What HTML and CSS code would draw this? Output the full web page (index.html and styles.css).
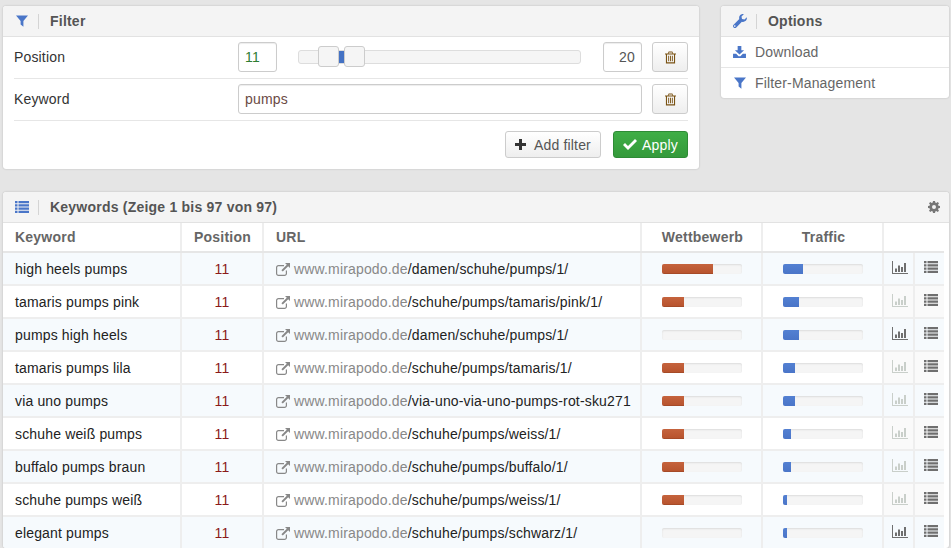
FILE: index.html
```html
<!DOCTYPE html>
<html lang="de">
<head>
<meta charset="utf-8">
<title>Keywords</title>
<link rel="stylesheet" href="styles.css">
</head>
<body>
<svg class="defs" width="0" height="0" aria-hidden="true">
  <symbol id="i-filter" viewBox="0 0 12 12"><path d="M0 .5h12L7.400 6v5.800L4.600 9.600V6z"/></symbol>
  <symbol id="i-trash" viewBox="0 0 12 13"><path d="M4 0h4l1 2h3v1.200h-1V13H1V3.200H0V2h3zM4.300 1.100 3.900 2h4.200l-.4-.9zM2.200 3.200v8.600h7.600V3.200zM3.500 4.500h1v6h-1zM5.500 4.500h1v6h-1zM7.500 4.500h1v6h-1z" fill-rule="evenodd"/></symbol>
  <symbol id="i-wrench" viewBox="0 0 14 14"><path d="M13.800 3.200c.3 1.500-.2 3-1.400 3.900-1 .8-2.300 1-3.500.6L3.300 13.400c-.8.800-2 .8-2.700 0-.8-.8-.8-2 0-2.700l5.700-5.600C5.900 3.900 6.100 2.600 6.900 1.600 7.800.4 9.300-.1 10.800.2L8.500 2.500l.5 2.500 2.500.5zM2 11.300a.8.800 0 1 0 .1 1.500.8.800 0 0 0-.1-1.500z" fill-rule="evenodd"/></symbol>
  <symbol id="i-download" viewBox="0 0 14 13"><path d="M5 0h4v4.500h3L7 9.300 2 4.500h3zM0 8.500h3.400L6 11h2l2.600-2.500H14V13H0z"/></symbol>
  <symbol id="i-list" viewBox="0 0 14 12"><path d="M0 0h2.500v2.200H0zM3.500 0H14v2.200H3.500zM0 3.300h2.500v2.200H0zM3.500 3.300H14v2.200H3.500zM0 6.600h2.500v2.200H0zM3.500 6.600H14v2.200H3.500zM0 9.800h2.500V12H0zM3.500 9.800H14V12H3.500z"/></symbol>
  <symbol id="i-gear" viewBox="0 0 12 12"><path d="M5 0h2l.3 1.600 1 .4L9.700 1l1.300 1.300-1 1.400.5 1L12 5v2l-1.500.3-.5 1 1 1.400L9.700 11l-1.400-1-1 .4L7 12H5l-.3-1.600-1-.4L2.300 11 1 9.700l1-1.400-.5-1L0 7V5l1.500-.3.500-1-1-1.400L2.300 1l1.400 1 1-.4zM6 4a2 2 0 1 0 0 4 2 2 0 0 0 0-4z" fill-rule="evenodd"/></symbol>
  <symbol id="i-ext" viewBox="0 0 14 13"><path d="M2.500 2H8v1.200H2.500c-.7 0-1.300.6-1.300 1.300v6c0 .7.600 1.300 1.300 1.300h6c.7 0 1.300-.6 1.300-1.300V7.500H11v3c0 1.400-1.100 2.500-2.500 2.500h-6C1.100 13 0 11.900 0 10.500v-6C0 3.100 1.100 2 2.500 2z"/><path d="M9 0h5v5l-1.800-1.800L6.800 8.600 5.400 7.200l5.400-5.400z"/></symbol>
  <symbol id="i-chart" viewBox="0 0 16 13"><path d="M0 0h1v12h15v1H0z"/><path d="M3 7.500h2V11H3zM6 4.500h2V11H6zM9 6h2v5H9zM12 2h2v9h-2z"/></symbol>
  <symbol id="i-plus" viewBox="0 0 11 11"><path d="M4 0h3v4h4v3H7v4H4V7H0V4h4z"/></symbol>
  <symbol id="i-check" viewBox="0 0 14 11"><path d="M5 11 0 6l2-2 3 3 7-7 2 2z"/></symbol>
</svg>

<div class="top">
  <section class="panel filter">
    <header class="panel-head">
      <span class="head-icon"><svg class="ico ico-filter"><use href="#i-filter"/></svg></span>
      <h2>Filter</h2>
    </header>
    <div class="filter-body">
      <div class="filter-row">
        <label class="filter-label">Position</label>
        <div class="filter-control">
          <span class="field field-num field-green">11</span>
          <div class="slider">
            <span class="slider-range"></span>
            <span class="slider-handle handle-a"></span>
            <span class="slider-handle handle-b"></span>
          </div>
          <span class="field field-num field-right">20</span>
        </div>
        <button class="btn btn-trash"><svg class="ico ico-trash"><use href="#i-trash"/></svg></button>
      </div>
      <div class="filter-row">
        <label class="filter-label">Keyword</label>
        <div class="filter-control">
          <span class="field field-wide">pumps</span>
        </div>
        <button class="btn btn-trash"><svg class="ico ico-trash"><use href="#i-trash"/></svg></button>
      </div>
      <div class="filter-actions">
        <button class="btn btn-add"><svg class="ico ico-plus"><use href="#i-plus"/></svg>Add filter</button>
        <button class="btn btn-apply"><svg class="ico ico-check"><use href="#i-check"/></svg>Apply</button>
      </div>
    </div>
  </section>

  <section class="panel options">
    <header class="panel-head">
      <span class="head-icon"><svg class="ico ico-wrench"><use href="#i-wrench"/></svg></span>
      <h2>Options</h2>
    </header>
    <a class="option-link"><svg class="ico ico-download"><use href="#i-download"/></svg>Download</a>
    <a class="option-link"><svg class="ico ico-filter"><use href="#i-filter"/></svg>Filter-Management</a>
  </section>
</div>

<section class="panel keywords">
  <header class="panel-head">
    <span class="head-icon"><svg class="ico ico-list-blue"><use href="#i-list"/></svg></span>
    <h2>Keywords (Zeige 1 bis 97 von 97)</h2>
    <svg class="ico ico-gear"><use href="#i-gear"/></svg>
  </header>
  <table class="kw-table">
    <colgroup>
      <col class="c-kw"><col class="c-pos"><col class="c-url"><col class="c-bar"><col class="c-bar"><col class="c-act"><col class="c-act2">
    </colgroup>
    <thead>
      <tr>
        <th>Keyword</th><th class="center th-pos">Position</th><th>URL</th><th class="center th-bar">Wettbewerb</th><th class="center th-bar">Traffic</th><th class="th-plain"></th><th></th>
      </tr>
    </thead>
    <tbody id="rows">
      <tr><td>high heels pumps</td><td class="pos">11</td><td class="url"><svg class="ico ico-ext"><use href="#i-ext"/></svg><span class="host">www.mirapodo.de</span>/damen/schuhe/pumps/1/</td><td><div class="bar"><span class="fill red" style="width:64%"></span></div></td><td><div class="bar"><span class="fill blue" style="width:25%"></span></div></td><td class="act"><svg class="ico ico-chart"><use href="#i-chart"/></svg></td><td class="act"><svg class="ico ico-list"><use href="#i-list"/></svg></td></tr>
      <tr><td>tamaris pumps pink</td><td class="pos">11</td><td class="url"><svg class="ico ico-ext"><use href="#i-ext"/></svg><span class="host">www.mirapodo.de</span>/schuhe/pumps/tamaris/pink/1/</td><td><div class="bar"><span class="fill red" style="width:27.500%"></span></div></td><td><div class="bar"><span class="fill blue" style="width:20%"></span></div></td><td class="act"><svg class="ico ico-chart faint"><use href="#i-chart"/></svg></td><td class="act"><svg class="ico ico-list"><use href="#i-list"/></svg></td></tr>
      <tr><td>pumps high heels</td><td class="pos">11</td><td class="url"><svg class="ico ico-ext"><use href="#i-ext"/></svg><span class="host">www.mirapodo.de</span>/damen/schuhe/pumps/1/</td><td><div class="bar"></div></td><td><div class="bar"><span class="fill blue" style="width:20%"></span></div></td><td class="act"><svg class="ico ico-chart"><use href="#i-chart"/></svg></td><td class="act"><svg class="ico ico-list"><use href="#i-list"/></svg></td></tr>
      <tr><td>tamaris pumps lila</td><td class="pos">11</td><td class="url"><svg class="ico ico-ext"><use href="#i-ext"/></svg><span class="host">www.mirapodo.de</span>/schuhe/pumps/tamaris/1/</td><td><div class="bar"><span class="fill red" style="width:27.500%"></span></div></td><td><div class="bar"><span class="fill blue" style="width:15%"></span></div></td><td class="act"><svg class="ico ico-chart faint"><use href="#i-chart"/></svg></td><td class="act"><svg class="ico ico-list"><use href="#i-list"/></svg></td></tr>
      <tr><td>via uno pumps</td><td class="pos">11</td><td class="url"><svg class="ico ico-ext"><use href="#i-ext"/></svg><span class="host">www.mirapodo.de</span>/via-uno-via-uno-pumps-rot-sku271</td><td><div class="bar"><span class="fill red" style="width:27.500%"></span></div></td><td><div class="bar"><span class="fill blue" style="width:15%"></span></div></td><td class="act"><svg class="ico ico-chart faint"><use href="#i-chart"/></svg></td><td class="act"><svg class="ico ico-list"><use href="#i-list"/></svg></td></tr>
      <tr><td>schuhe weiß pumps</td><td class="pos">11</td><td class="url"><svg class="ico ico-ext"><use href="#i-ext"/></svg><span class="host">www.mirapodo.de</span>/schuhe/pumps/weiss/1/</td><td><div class="bar"><span class="fill red" style="width:27.500%"></span></div></td><td><div class="bar"><span class="fill blue" style="width:10%"></span></div></td><td class="act"><svg class="ico ico-chart faint"><use href="#i-chart"/></svg></td><td class="act"><svg class="ico ico-list"><use href="#i-list"/></svg></td></tr>
      <tr><td>buffalo pumps braun</td><td class="pos">11</td><td class="url"><svg class="ico ico-ext"><use href="#i-ext"/></svg><span class="host">www.mirapodo.de</span>/schuhe/pumps/buffalo/1/</td><td><div class="bar"><span class="fill red" style="width:27.500%"></span></div></td><td><div class="bar"><span class="fill blue" style="width:10%"></span></div></td><td class="act"><svg class="ico ico-chart faint"><use href="#i-chart"/></svg></td><td class="act"><svg class="ico ico-list"><use href="#i-list"/></svg></td></tr>
      <tr><td>schuhe pumps weiß</td><td class="pos">11</td><td class="url"><svg class="ico ico-ext"><use href="#i-ext"/></svg><span class="host">www.mirapodo.de</span>/schuhe/pumps/weiss/1/</td><td><div class="bar"><span class="fill red" style="width:27.500%"></span></div></td><td><div class="bar"><span class="fill blue" style="width:5%"></span></div></td><td class="act"><svg class="ico ico-chart faint"><use href="#i-chart"/></svg></td><td class="act"><svg class="ico ico-list"><use href="#i-list"/></svg></td></tr>
      <tr><td>elegant pumps</td><td class="pos">11</td><td class="url"><svg class="ico ico-ext"><use href="#i-ext"/></svg><span class="host">www.mirapodo.de</span>/schuhe/pumps/schwarz/1/</td><td><div class="bar"></div></td><td><div class="bar"><span class="fill blue" style="width:5%"></span></div></td><td class="act"><svg class="ico ico-chart"><use href="#i-chart"/></svg></td><td class="act"><svg class="ico ico-list"><use href="#i-list"/></svg></td></tr>
    </tbody>
  </table>
</section>
</body>
</html>
```

FILE: styles.css
```css
* { box-sizing: border-box; }

html, body { height: 100%; }

body {
  margin: 0;
  padding: 6px 2px 0 3px;
  background: #e5e5e5;
  color: #333;
  font: 14px/20px "Liberation Sans", Arial, sans-serif;
  letter-spacing: .16px;
  overflow: hidden;
}

.defs { position: absolute; }

.ico { display: inline-block; fill: currentColor; flex: none; }

.top {
  display: flex;
  gap: 22px;
  align-items: flex-start;
  margin-bottom: 23px;
}

.panel {
  background: #fff;
  border-radius: 3px;
  box-shadow: 0 0 2px rgba(0, 0, 0, .22);
}

.filter { width: 696px; height: 163px; }

.options { width: 228px; height: 92px; }

.panel-head {
  display: flex;
  align-items: center;
  height: 31px;
  background: #f4f4f4;
  border-bottom: 1px solid #e2e2e2;
  border-radius: 3px 3px 0 0;
}

.head-icon {
  display: flex;
  align-items: center;
  justify-content: center;
  width: 36px;
  height: 15px;
  padding-left: 2px;
  margin-right: 11px;
  border-right: 1px solid #d4d4d4;
  color: #4a76c8;
}

.panel-head h2 {
  margin: 0;
  font-size: 14px;
  font-weight: bold;
  color: #555;
  letter-spacing: .22px;
}

.ico-filter { width: 12px; height: 12px; color: #4a76c8; }

.filter-body { padding: 0 11px; }

.filter-row {
  display: flex;
  align-items: center;
  height: 42px;
  border-bottom: 1px solid #e6e6e6;
}

.filter-label { flex: 0 0 214px; margin-top: -2px; color: #333; }

.filter-control {
  display: flex;
  align-items: center;
  flex: 0 0 404px;
  margin-left: 10px;
  height: 30px;
  margin-top: -1px;
}

.field {
  display: block;
  height: 30px;
  border: 1px solid #ccc;
  border-radius: 3px;
  padding: 4px 6px;
  background: #fff;
  color: #555;
  box-shadow: inset 0 1px 1px rgba(0, 0, 0, .075);
}

.field-num { width: 39px; flex: none; }
.field-green { color: #2f7d32; }
.field-right { text-align: right; }
.field-wide { width: 404px; color: #6b4a44; }

.slider {
  position: relative;
  flex: none;
  width: 283px;
  height: 14px;
  margin: 0 22px 0 21px;
  background: #f5f5f5;
  border: 1px solid #ddd;
  border-radius: 3px;
}

.slider-range {
  position: absolute;
  left: 39px;
  top: 0;
  width: 7px;
  height: 12px;
  background: #4472c4;
}

.slider-handle {
  position: absolute;
  top: -5px;
  width: 21px;
  height: 21px;
  background: #f5f5f5;
  border: 1px solid #ccc;
  border-radius: 3px;
}

.handle-a { left: 19px; }
.handle-b { left: 45px; }

.btn {
  display: inline-flex;
  align-items: center;
  justify-content: center;
  height: 27px;
  border: 1px solid #ccc;
  border-radius: 3px;
  padding: 0;
  font: inherit;
  letter-spacing: inherit;
  color: #555;
  background: linear-gradient(#fff, #eee);
}

.btn-trash { flex: none; width: 36px; height: 30px; margin-left: 10px; margin-top: -1px; }

.ico-trash { width: 11px; height: 13px; color: #7a5314; }

.filter-actions {
  display: flex;
  justify-content: flex-end;
  gap: 12px;
  padding-top: 10px;
}

.btn-add { width: 96px; }
.btn-apply {
  width: 75px;
  border-color: #2e8b36;
  background: linear-gradient(#3fae46, #349a3b);
  color: #fff;
}

.ico-plus { width: 11px; height: 11px; margin-right: 8px; color: #333; }
.ico-check { width: 14px; height: 11px; margin-right: 5px; color: #fff; }

.ico-wrench { width: 14px; height: 14px; color: #4a76c8; }

.option-link {
  display: flex;
  align-items: center;
  height: 31px;
  padding: 0 0 1px 12px;
  color: #666;
  border-bottom: 1px solid #e6e6e6;
}

.option-link:last-child { border-bottom: 0; }

.option-link .ico { margin-right: 9px; }

.ico-download { width: 13px; height: 12px; color: #4a76c8; }

.option-link .ico-filter { margin-left: 1px; margin-right: 9px; }

.keywords { height: 356px; overflow: hidden; }

.ico-list-blue { width: 14px; height: 12px; color: #4a76c8; }

.ico-gear { width: 12px; height: 12px; margin-left: auto; margin-right: 9px; color: #777; }

.kw-table {
  width: 941px;
  table-layout: fixed;
  border-collapse: collapse;
}

.c-kw { width: 178px; }
.c-pos { width: 82px; }
.c-url { width: 378px; }
.c-bar { width: 121px; }
.c-act { width: 31px; }
.c-act2 { width: 30px; }

.kw-table th {
  height: 29px;
  padding: 0 12px;
  text-align: left;
  font-weight: bold;
  color: #666;
  letter-spacing: .22px;
  border-right: 2px solid #eee;
  border-bottom: 2px solid #e6e6e6;
}

.kw-table th.center { text-align: center; }
.kw-table th.th-pos { padding-right: 14px; }
.kw-table th.th-bar { padding-left: 14px; }
.kw-table th.th-plain { border-right: 0; }

.kw-table td {
  height: 33px;
  padding: 0 12px;
  color: #222;
  border-right: 2px solid #eee;
  border-bottom: 2px solid #eee;
}

.kw-table tr > :last-child { border-right: 0; }

.kw-table tbody tr:nth-child(odd) td { background: #f6fafd; }

.kw-table td.pos { text-align: center; color: #8b1a1a; }

.kw-table td.url { white-space: nowrap; padding-right: 0; }

.host { color: #888; }

.ico-ext { width: 14px; height: 13px; margin-right: 4px; vertical-align: -2px; color: #888; }

.bar {
  width: 80px;
  height: 10px;
  margin-left: 8px;
  background: #f5f5f5;
  border-radius: 2px;
  box-shadow: inset 0 1px 2px rgba(0, 0, 0, .1);
  overflow: hidden;
}

.fill { display: block; height: 100%; }
.red { background: linear-gradient(#c5633d, #b9552f 85%, #9c4524); }
.blue { background: linear-gradient(#5380d2, #4a75c8); }

.kw-table td.act {
  padding: 0 0 0 2px;
  text-align: center;
  background: #fafafa;
}

.kw-table tbody tr:nth-child(even) td.act { background: #fafafa; }

.ico-chart { width: 16px; height: 13px; color: #6f6f6f; }
.ico-chart.faint { color: #c9cfca; }
.ico-list { width: 14px; height: 12px; color: #6f6f6f; vertical-align: 1px; }
```
